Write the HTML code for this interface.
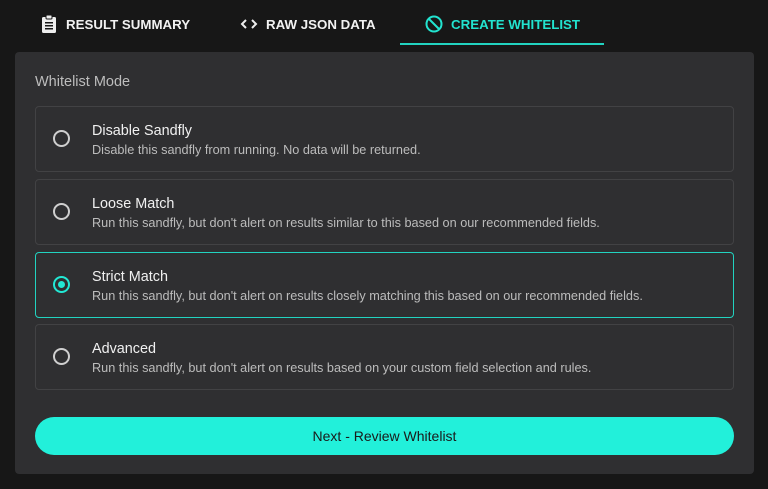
<!DOCTYPE html>
<html><head><style>
body{margin:0;width:768px;height:489px;background:#171717;font-family:"Liberation Sans",sans-serif;position:relative;overflow:hidden}
.tab{position:absolute;top:14px;font-size:13.3px;font-weight:bold;color:#f2f2f2;display:flex;align-items:center;gap:8px;height:20px}
.ul{position:absolute;left:400px;top:43px;width:204px;height:2px;background:#22d3c0}
.panel{position:absolute;left:15px;top:52px;width:739px;height:422px;background:#2f2f31;border-radius:4px}
.lbl{position:absolute;left:35px;top:74px;font-size:14.5px;color:#bdbdbd}
.card{position:absolute;left:35px;width:697px;height:64px;border:1px solid #424244;border-radius:4px;background:#2f2f31}
.card.sel{border-color:#22d3c0}
.r{position:absolute;left:17px;top:23px;width:13px;height:13px;border:2px solid #cfcfcf;border-radius:50%}
.sel .r{border-color:#22e8d4}
.sel .r:after{content:"";position:absolute;left:3px;top:3px;width:7px;height:7px;border-radius:50%;background:#22e8d4}
.t{position:absolute;left:56px;top:16px;font-size:14.4px;color:#f0f0f0}
.d{position:absolute;left:56px;top:36px;font-size:12.7px;color:#bcbcbc}
.btn{position:absolute;left:35px;top:417px;width:699px;height:38px;border-radius:19px;background:#22f0da;color:#1a1a1a;font-size:14px;text-align:center;line-height:39px}
</style></head><body>
<div class="tab" style="left:40px"><svg width="18" height="20" viewBox="0 0 18 20"><rect x="2" y="3" width="14" height="16" rx="1.5" fill="#eee"/><rect x="6" y="1" width="6" height="4" rx="1" fill="#eee" stroke="#171717"/><rect x="5" y="8" width="8" height="1.5" fill="#171717"/><rect x="5" y="11" width="8" height="1.5" fill="#171717"/><rect x="5" y="14" width="8" height="1.5" fill="#171717"/></svg>RESULT SUMMARY</div>
<div class="tab" style="left:240px"><svg width="18" height="14" viewBox="0 0 18 14"><path d="M6 3L2 7l4 4M12 3l4 4-4 4" stroke="#eee" stroke-width="2" fill="none"/></svg>RAW JSON DATA</div>
<div class="tab" style="left:425px;color:#22e3cf"><svg width="18" height="18" viewBox="0 0 18 18"><circle cx="9" cy="9" r="7.5" stroke="#22e3cf" stroke-width="2" fill="none"/><path d="M4 4l10 10" stroke="#22e3cf" stroke-width="2"/></svg>CREATE WHITELIST</div>
<div class="ul"></div>
<div class="panel"></div>
<div class="lbl">Whitelist Mode</div>
<div class="card" style="top:106px"><div class="r"></div><div class="t">Disable Sandfly</div><div class="d">Disable this sandfly from running. No data will be returned.</div></div>
<div class="card" style="top:179px"><div class="r"></div><div class="t">Loose Match</div><div class="d">Run this sandfly, but don't alert on results similar to this based on our recommended fields.</div></div>
<div class="card sel" style="top:252px"><div class="r"></div><div class="t">Strict Match</div><div class="d">Run this sandfly, but don't alert on results closely matching this based on our recommended fields.</div></div>
<div class="card" style="top:324px"><div class="r"></div><div class="t">Advanced</div><div class="d">Run this sandfly, but don't alert on results based on your custom field selection and rules.</div></div>
<div class="btn">Next - Review Whitelist</div>
</body></html>
